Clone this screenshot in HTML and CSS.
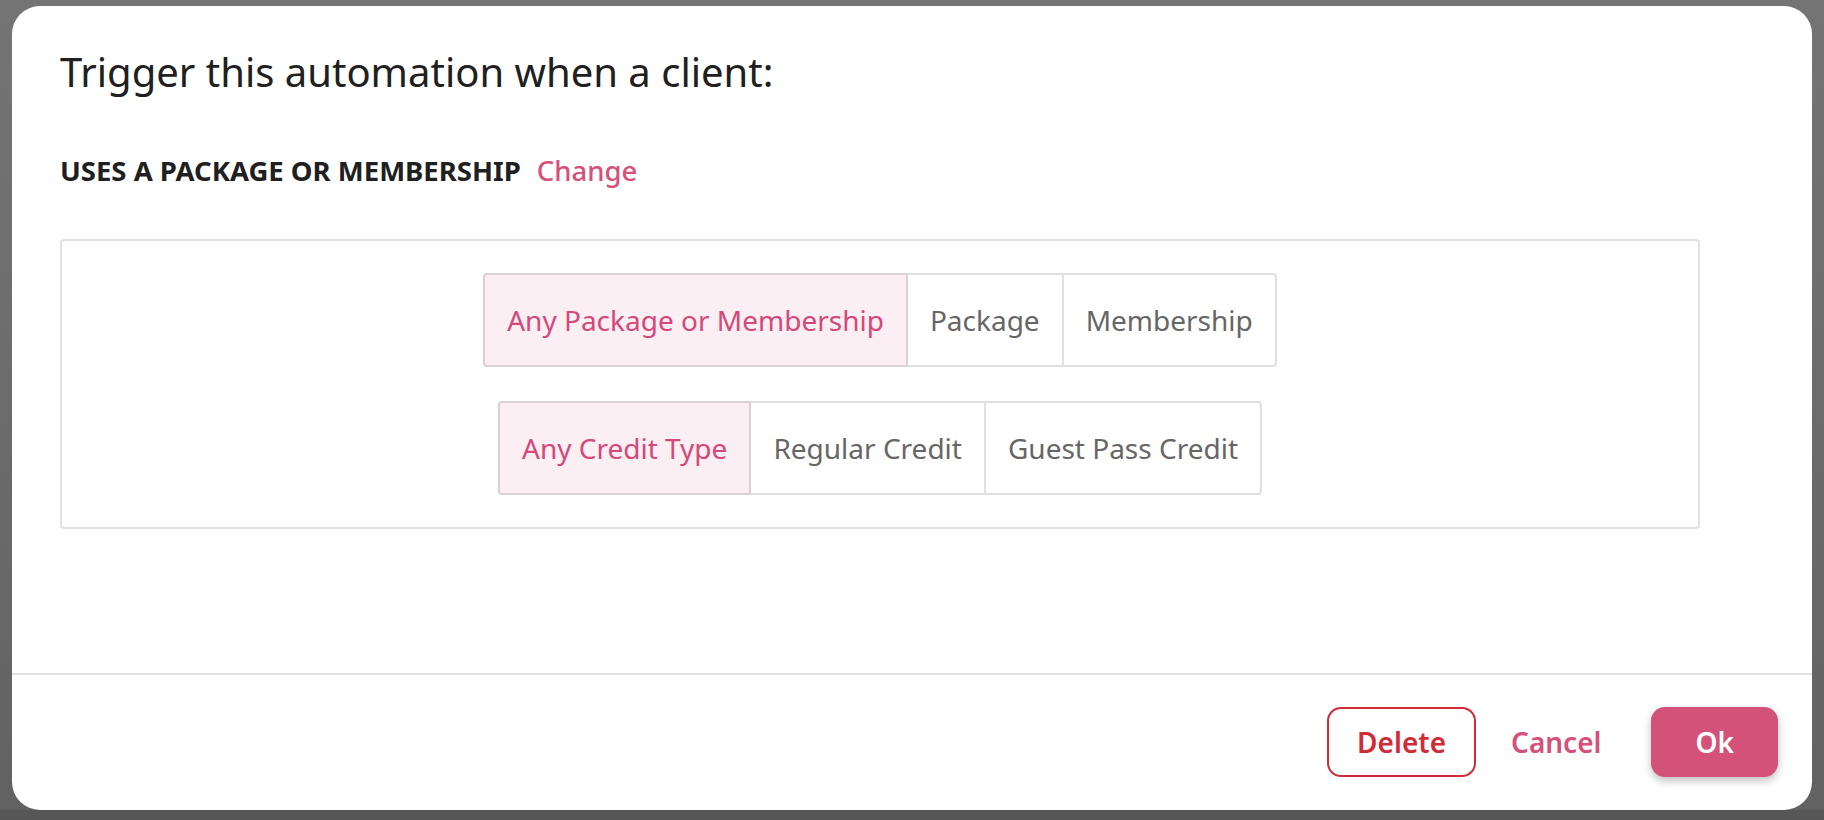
FILE: index.html
```html
<!DOCTYPE html>
<html lang="en">
<head>
  <meta charset="UTF-8">
  <meta name="viewport" content="width=device-width, initial-scale=1.0">
  <title>Automation trigger</title>
  <link rel="stylesheet" href="styles.css">
</head>
<body>
<div class="modal">
  <div class="modal-body">
    <h2 class="modal-title">Trigger this automation when a client:</h2>

    <div class="trigger-line">
      <span class="trigger-name">USES A PACKAGE OR MEMBERSHIP</span>
      <a href="#" class="link">Change</a>
    </div>

    <div class="options-box">
      <div class="segmented">
        <button class="segment active">Any Package or Membership</button>
        <button class="segment">Package</button>
        <button class="segment">Membership</button>
      </div>
      <div class="segmented">
        <button class="segment active">Any Credit Type</button>
        <button class="segment">Regular Credit</button>
        <button class="segment">Guest Pass Credit</button>
      </div>
    </div>
  </div>

  <div class="modal-footer">
    <button class="btn btn-delete">Delete</button>
    <button class="btn btn-cancel">Cancel</button>
    <button class="btn btn-ok">Ok</button>
  </div>
</div>
</body>
</html>
```

FILE: styles.css
```css
* {
  box-sizing: border-box;
  margin: 0;
  padding: 0;
  font-family: 'Noto Sans', 'Open Sans', sans-serif;
}

/* dimmed page behind the dialog */
body {
  height: 820px;
  overflow: hidden;
  padding: 6px 12px 10px 12px;
  background: linear-gradient(to bottom, #747474 0%, #6b6b6b 55%, #626262 98.7%, #565656 98.8%);
}

.modal {
  height: 804px;
  background: #fff;
  border-radius: 28px;
  display: flex;
  flex-direction: column;
  overflow: hidden;
}

.modal-body {
  flex: 1;
  padding: 39px 48px 0 48px;
}

.modal-title {
  font-size: 40px;
  line-height: 54px;
  font-weight: 400;
  color: #202020;
}

.trigger-line {
  margin-top: 53px;
  display: flex;
  align-items: baseline;
  gap: 16px;
  font-size: 27.5px;
  line-height: 38px;
}

.trigger-name {
  font-weight: 700;
  color: #202020;
}

.link {
  color: #d6507a;
  font-weight: 500;
  text-decoration: none;
}

/* box holding the two option groups */
.options-box {
  width: 1640px;
  margin-top: 49px;
  border: 2px solid #e2e2e2;
  border-radius: 4px;
  padding: 32px;
  display: flex;
  flex-direction: column;
  align-items: center;
  gap: 34px;
}

.segmented {
  display: flex;
  height: 94px;
}

.segment {
  font-size: 28px;
  color: #666;
  background: #fff;
  border: 2px solid #e0e0e0;
  border-left-width: 0;
  padding: 0 22px;
  cursor: pointer;
}

.segment:first-child {
  border-left-width: 2px;
  border-radius: 4px 0 0 4px;
}

.segment:last-child {
  border-radius: 0 4px 4px 0;
}

.segment.active {
  color: #d4487a;
  background: #fbeff3;
  border-color: #ddd0d5;
}

.modal-footer {
  border-top: 2px solid #e2e2e2;
  padding: 32px 34px 33px 0;
  display: flex;
  justify-content: flex-end;
  align-items: center;
}

.btn {
  height: 70px;
  font-size: 28px;
  font-weight: 600;
  border-radius: 14px;
  background: none;
  border: none;
  cursor: pointer;
}

.btn-delete {
  color: #cf2c37;
  border: 2px solid #cf2c37;
  padding: 0 28px;
}

.btn-cancel {
  color: #d6507a;
  padding: 0 22px;
  margin: 0 12px 0 13px;
}

.btn-ok {
  color: #fff;
  background: #d4527a;
  padding: 0 44px;
  margin-left: 16px;
  box-shadow: 0 4px 8px rgba(0, 0, 0, 0.25);
}
```
